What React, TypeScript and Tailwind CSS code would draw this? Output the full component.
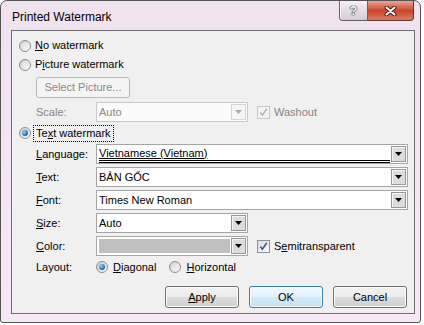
import type { ReactNode } from 'react';

const Radio = ({ checked = false }: { checked?: boolean }) => (
  <span className="flex h-[12px] w-[12px] shrink-0 items-center justify-center rounded-full border border-[#8e8f8f] bg-linear-to-br from-[#c9c9c9] to-[#fbfbfb]">
    {checked ? (
      <span className="h-[6px] w-[6px] rounded-full bg-[radial-gradient(circle_at_35%_35%,#9adaf7,#1f70b6_60%,#0c3b75)]" />
    ) : (
      <span className="h-[8px] w-[8px] rounded-full bg-linear-to-br from-[#dadada] to-[#f7f7f7]" />
    )}
  </span>
);

const CheckBox = ({ disabled = false }: { disabled?: boolean }) => (
  <span
    className={`flex h-[13px] w-[13px] shrink-0 items-center justify-center border ${
      disabled ? 'border-[#c6c6c6] bg-[#f4f4f4]' : 'border-[#8e8f8f] bg-linear-to-br from-[#dedede] to-[#fbfbfb]'
    }`}
  >
    <svg width="9" height="9" viewBox="0 0 9 9">
      <path d="M1.3 4.6 L3.4 7.2 L7.8 0.8" fill="none" stroke={disabled ? '#b3b3b3' : '#3f5796'} strokeWidth="1.6" />
    </svg>
  </span>
);

const Combo = ({ className, disabled = false, children }: { className: string; disabled?: boolean; children?: ReactNode }) => (
  <div className={`flex h-[20px] shrink-0 border ${disabled ? 'border-[#cacaca] bg-[#fbfbfb]' : 'border-[#a5a5a5] bg-white'} ${className}`}>
    <div className="flex min-w-0 flex-1 items-center overflow-hidden pl-[2px]">{children}</div>
    <div
      className={`m-px flex w-[15px] items-center justify-center border ${
        disabled ? 'border-[#d6d6d6] bg-[#f5f5f5]' : 'border-[#979797] bg-[#dcdcdc] shadow-[inset_1px_1px_0_#f5f5f5]'
      }`}
    >
      <svg width="7" height="4" viewBox="0 0 7 4">
        <path d="M0 0H7L3.5 4Z" fill={disabled ? '#a9a9a9' : '#000'} />
      </svg>
    </div>
  </div>
);

const FieldRow = ({ label, children }: { label: ReactNode; children: ReactNode }) => (
  <div className="flex items-center pl-[24px]">
    <span className="w-[60px] shrink-0">{label}</span>
    {children}
  </div>
);

const u = (c: string) => <span className="underline underline-offset-[1px]">{c}</span>;

const buttonBase = 'flex h-[22px] w-[74px] items-center justify-center rounded-[3px] border shadow-[inset_0_0_0_1px_#fbfbfb]';

export default function App() {
  return (
    <div className="h-[325px] w-[424px] bg-white font-['Liberation_Sans',Arial,sans-serif] text-[11px] text-black">
      <div className="flex h-[323px] w-[421px] flex-col rounded-t-[7px] rounded-b-[3px] border border-[#555] bg-linear-to-b from-[#f1e2ef] to-[#f8e8f6]">
        {/* title bar */}
        <div className="flex h-[29px] shrink-0 items-start pl-[11px] pr-[6px]">
          <span className="mt-[7px] text-[12px]">Printed Watermark</span>
          <div className="ml-auto flex">
            <div className="flex h-[20px] w-[29px] items-center justify-center rounded-bl-[4px] border border-t-0 border-[#626262] bg-linear-to-b from-[#f6eff5] to-[#d4cbd3] shadow-[inset_1px_0_0_#fff]">
              <span className="text-[13px] font-bold leading-none text-white [text-shadow:0_0_1px_#222,0_0_1px_#222,0_0_1px_#222]">?</span>
            </div>
            <div className="flex h-[20px] w-[46px] items-center justify-center rounded-br-[4px] border border-l-0 border-t-0 border-[#5a3a34] bg-linear-to-b from-[#e9a698] via-[#c9442b] to-[#dc7a60]">
              <svg width="13" height="10" viewBox="0 0 13 10">
                <path d="M2.5 1.5 L10.5 8.5 M10.5 1.5 L2.5 8.5" stroke="#4a1f18" strokeWidth="4" strokeLinecap="round" />
                <path d="M2.5 1.5 L10.5 8.5 M10.5 1.5 L2.5 8.5" stroke="#fff" strokeWidth="2" strokeLinecap="round" />
              </svg>
            </div>
          </div>
        </div>

        {/* client area */}
        <div className="ml-[10px] mr-[5px] flex h-[284px] shrink-0 flex-col border border-[#6f6f6f] bg-[#f0f0f0]">
          <div className="mt-[5px] flex h-[19px] items-center gap-[4px] pl-[7px]">
            <Radio />
            <span>{u('N')}o watermark</span>
          </div>
          <div className="flex h-[19px] items-center gap-[4px] pl-[7px]">
            <Radio />
            <span>P{u('i')}cture watermark</span>
          </div>
          <div className="mt-[3px] pl-[24px]">
            <div className="flex h-[21px] w-[94px] items-center justify-center rounded-[3px] border border-[#b5b9bc] bg-[#f4f4f4] text-[#8a8a8a]">
              Select Picture...
            </div>
          </div>
          <div className="mt-[4px]">
            <FieldRow label={<span className="text-[#858585]">Scale:</span>}>
              <Combo className="w-[152px]" disabled>
                <span className="text-[#8a8a8a]">Auto</span>
              </Combo>
              <div className="ml-[9px] flex items-center gap-[4px]">
                <CheckBox disabled />
                <span className="text-[#858585]">Washout</span>
              </div>
            </FieldRow>
          </div>
          <div className="mt-[2px] flex h-[18px] items-center gap-[2px] pl-[7px]">
            <Radio checked />
            <span className="flex h-[17px] items-center border border-dotted border-black px-[2px]">Te{u('x')}t watermark</span>
          </div>

          <div className="mt-[2px] flex flex-col gap-[3px]">
            <FieldRow label={<span>{u('L')}anguage:</span>}>
              <Combo className="w-[312px]">
                <div className="flex w-full flex-col">
                  <span className="leading-[14px] underline underline-offset-[1px]">Vietnamese (Vietnam)</span>
                  <span className="h-[3px] w-full border-y border-black" />
                </div>
              </Combo>
            </FieldRow>
            <FieldRow label={<span>{u('T')}ext:</span>}>
              <Combo className="w-[312px]">
                <span>BẢN GỐC</span>
              </Combo>
            </FieldRow>
            <FieldRow label={<span>{u('F')}ont:</span>}>
              <Combo className="w-[312px]">
                <span>Times New Roman</span>
              </Combo>
            </FieldRow>
            <FieldRow label={<span>{u('S')}ize:</span>}>
              <Combo className="w-[152px]">
                <span>Auto</span>
              </Combo>
            </FieldRow>
            <FieldRow label={<span>{u('C')}olor:</span>}>
              <Combo className="w-[152px]">
                <span className="h-[14px] w-full bg-[#c0c0c0]" />
              </Combo>
              <div className="ml-[9px] flex items-center gap-[4px]">
                <CheckBox />
                <span>S{u('e')}mitransparent</span>
              </div>
            </FieldRow>
          </div>

          <div className="mt-[2px] flex h-[18px] items-center pl-[24px]">
            <span className="w-[60px] shrink-0">Layout:</span>
            <Radio checked />
            <span className="ml-[5px]">{u('D')}iagonal</span>
            <span className="ml-[13px]">
              <Radio />
            </span>
            <span className="ml-[5px]">{u('H')}orizontal</span>
          </div>

          <div className="mt-[10px] flex justify-end gap-[10px] pr-[7px]">
            <div className={`${buttonBase} border-[#707070] bg-[linear-gradient(#f2f2f2,#ebebeb_50%,#dddddd_50%,#cfcfcf)]`}>
              <span>{u('A')}pply</span>
            </div>
            <div className={`${buttonBase} border-[#3c7fb1] bg-[linear-gradient(#f1f8fd,#e4f2fb_50%,#d3ebf9_50%,#c4e3f6)]`}>
              OK
            </div>
            <div className={`${buttonBase} border-[#707070] bg-[linear-gradient(#f2f2f2,#ebebeb_50%,#dddddd_50%,#cfcfcf)]`}>
              Cancel
            </div>
          </div>
        </div>
      </div>
    </div>
  );
}
